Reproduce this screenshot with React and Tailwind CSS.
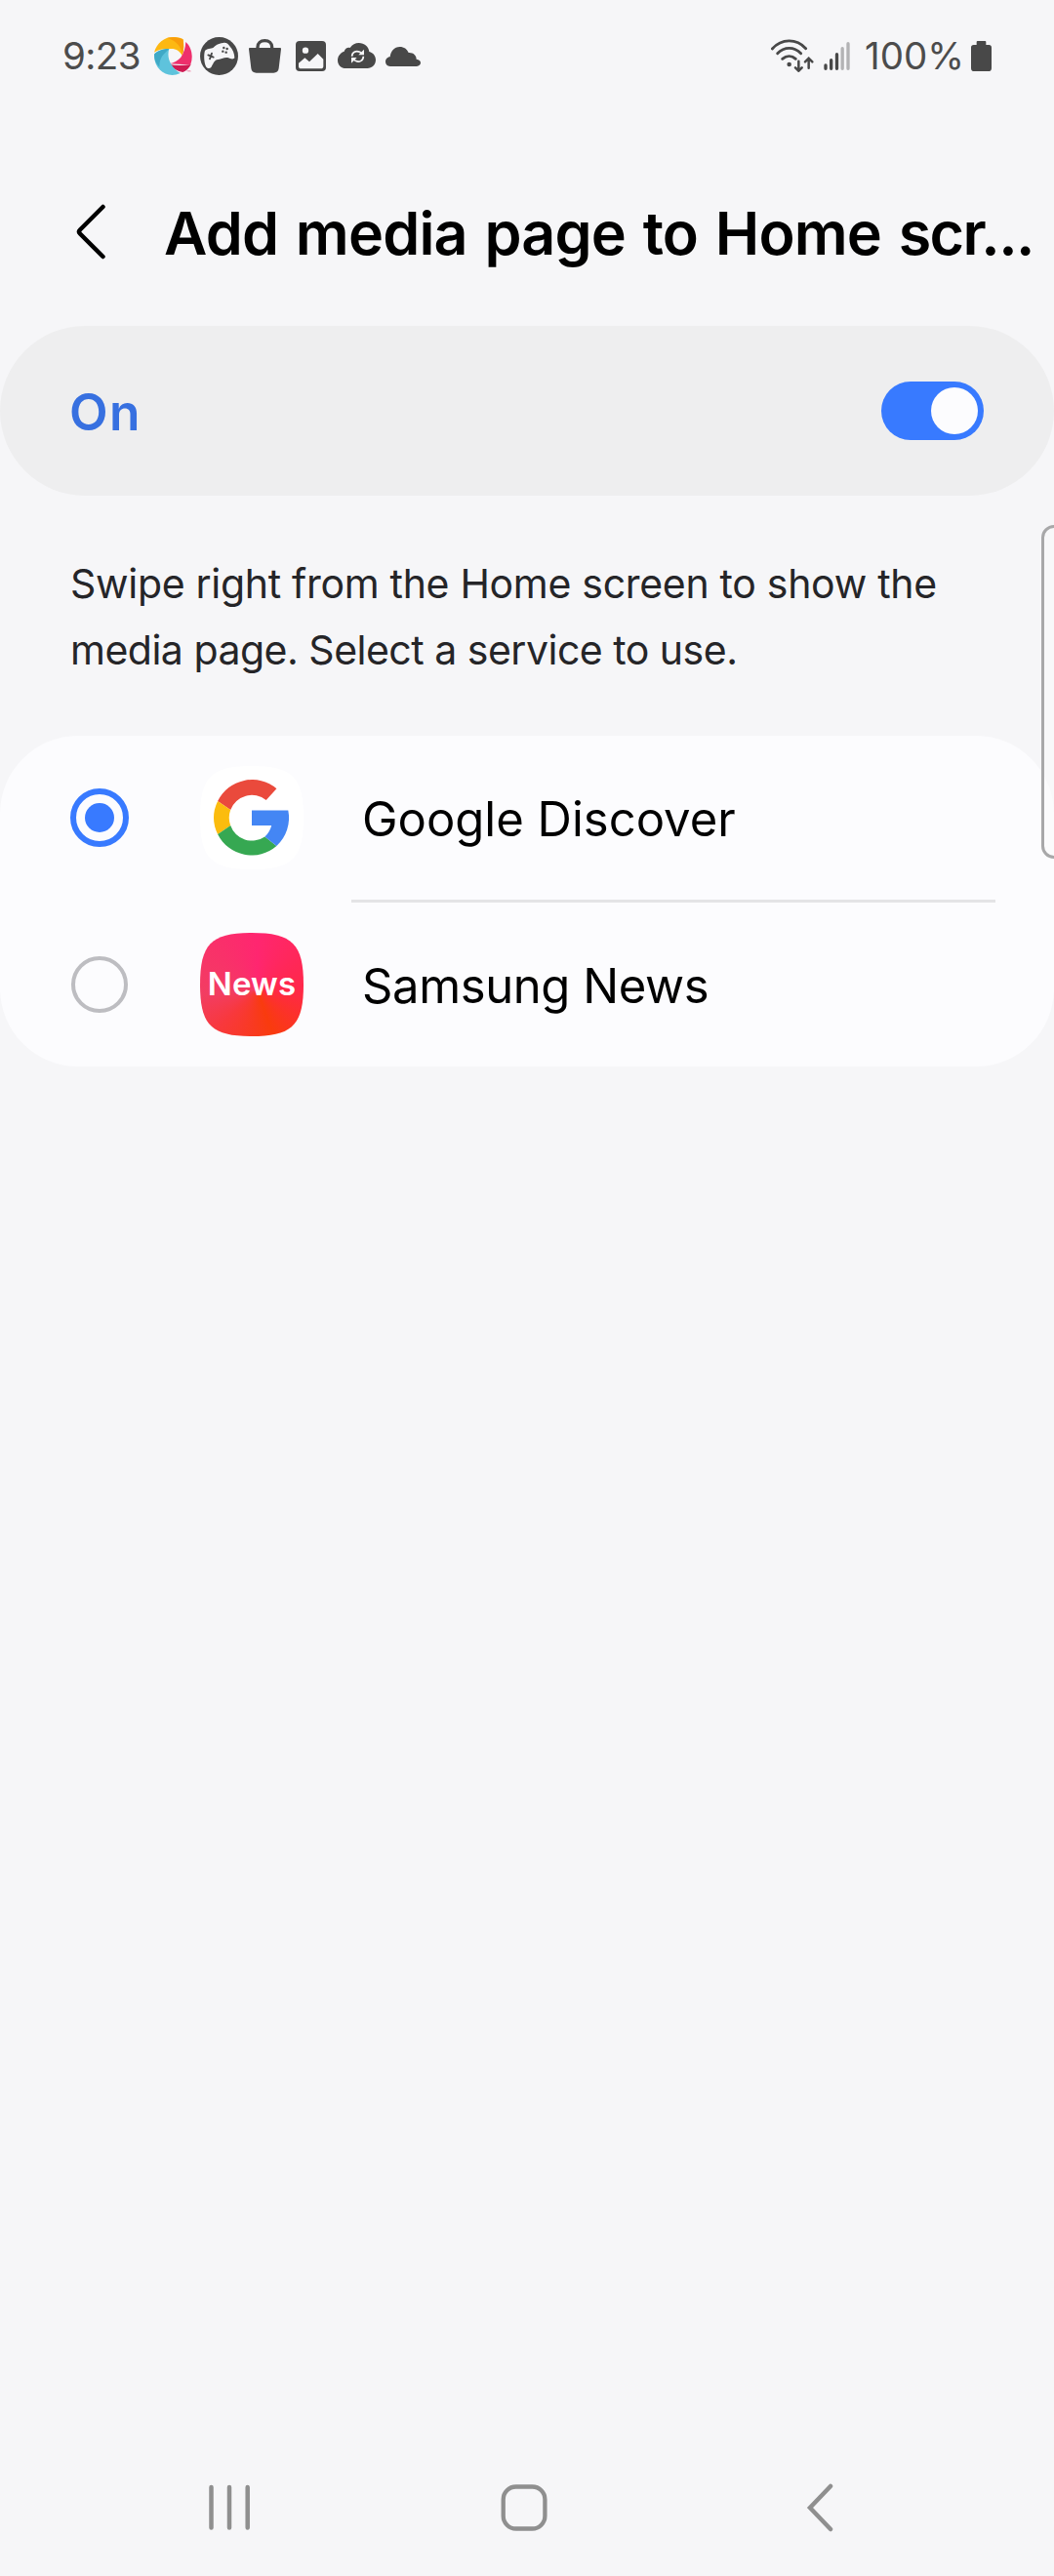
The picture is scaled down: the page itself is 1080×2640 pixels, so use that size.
const INK = "#484848";

function SwirlIcon() {
  return (
    <svg className="ml-[15px]" width="39" height="39" viewBox="324 54 117 117">
      <path d="M324 101C332 72 355 54 382 54c18 0 27 4 31 7 2 16 3 31-3 49-8-12-17-20-34-20-20-1-40 2-52 11z" fill="#fdb813" />
      <path d="M364 56c22-4 42 0 49 6 2 16 3 31-3 48-2-26-16-44-46-54z" fill="#f99d0b" />
      <path d="M421 69c18 16 24 44 15 69-14 2-43-1-66-2 14-3 28-10 36-20 9-14 14-28 15-47z" fill="#ee2f6c" />
      <path d="M437 138c-6 12-14 20-25 24-16-3-31-12-41-24 22 4 45 3 66 0z" fill="#cf1a52" />
      <path d="M324 107c8-9 24-17 46-17-5 16-3 32 6 47 8 13 17 21 28 28-40 19-82-12-80-58z" fill="#5ec3dc" />
      <path d="M324 107c8-9 24-17 46-17-14 16-30 22-30 56-10-10-16-22-16-39z" fill="#3fa9c6" />
      <path d="M424 158h5m1 3v-4l2 2 3-2v4" stroke="#ee7aa0" strokeWidth="2" fill="none" />
    </svg>
  );
}

function GamepadIcon() {
  return (
    <svg className="ml-2" width="39" height="39" viewBox="465 54 117 117">
      <circle cx="523.5" cy="112.500" r="58.500" fill={INK} />
      <path d="M480 96C486 88 498 90 506 86C512 80 520 74 536 72C546 70 552 76 556 82C566 92 571 106 571 118C568 123 560 122 550 117C540 115 530 122 516 124C508 127 505 138 499 147C495 151 488 151 484 146C477 134 476 108 480 96Z" fill="#f6f6f8" />
      <path d="M490 109l16 7m-5-12l-6 17" stroke={INK} strokeWidth="5.500" strokeLinecap="round" />
      <circle cx="538" cy="87" r="3.600" fill={INK} />
      <circle cx="548" cy="90" r="3.600" fill={INK} />
      <circle cx="535" cy="98" r="3.600" fill={INK} />
      <circle cx="545" cy="101" r="3.600" fill={INK} />
    </svg>
  );
}

function BagIcon() {
  return (
    <svg className="ml-[11px]" width="33" height="35" viewBox="615 60 99 105">
      <path d="M642 92v-7c0-12 9-20 22-20s22 8 22 20v7" fill="none" stroke={INK} strokeWidth="10" />
      <path d="M619 87h91c3 0 4 1 4 4l-7 59c-1 9-7 14-16 14h-53c-9 0-15-5-16-14l-7-59c0-3 1-4 4-4z" fill={INK} />
    </svg>
  );
}

function PictureIcon() {
  return (
    <svg className="ml-[15px]" width="31" height="31" viewBox="759 66 93 93">
      <rect x="759" y="66" width="93" height="93" rx="12" fill={INK} />
      <circle cx="789" cy="95" r="9.500" fill="#f6f6f8" />
      <path d="M768 134l19-16 14 12 26-25 17 17v22c0 4-3 7-7 7h-62c-4 0-7-3-7-7z" fill="#f6f6f8" />
    </svg>
  );
}

function CloudSyncIcon() {
  return (
    <svg className="ml-3" width="39" height="26" viewBox="888 72 117 78">
      <path d="M914 150c-16 0-26-11-26-25 0-13 9-23 20-27 3-9 10-13 18-11 7-10 16-15 27-15 17 0 30 11 32 27 12 3 20 13 20 25 0 15-11 26-26 26z" fill={INK} />
      <g fill="none" stroke="#f6f6f8" strokeWidth="5">
        <path d="M932 113c0-12 12-19 24-13l7 5" />
        <path d="M967 113c0 13-12 20-24 14l-8-5" />
      </g>
      <path d="M969 92v17h-17zM930 134v-17h17z" fill="#f6f6f8" />
    </svg>
  );
}

function CloudIcon() {
  return (
    <svg className="ml-[10px] mt-0.5" width="36" height="20" viewBox="1034 78 108 60">
      <path d="M1048 138c-9 0-14-6-14-14 0-8 6-15 14-15 2-18 13-31 30-31 13 0 22 7 27 18 14-1 24 8 24 20 8 1 13 5 13 11s-5 11-12 11z" fill={INK} />
    </svg>
  );
}

function WifiIcon() {
  return (
    <svg width="44" height="34" viewBox="92 58 132 102" fill="none" stroke={INK} strokeLinecap="round">
      <path d="M96 88c29-32 74-32 103-1" strokeWidth="8.500" />
      <path d="M112 102c21-21 51-21 72 0" strokeWidth="8.500" />
      <path d="M127 119c13-11 29-11 41 0" strokeWidth="8.500" />
      <circle cx="148" cy="136" r="6.800" fill={INK} stroke="none" />
      <path d="M177 126v30m-10-10l10 10 10-10M208 147v-30m-11 11l11-11 11 11" strokeWidth="7.500" />
    </svg>
  );
}

function SignalIcon() {
  return (
    <svg className="ml-[10px]" width="27" height="29" viewBox="252 66 81 87" strokeWidth="10" strokeLinecap="round">
      <path d="M258 138v10M275 122v26M292.500 104v44" stroke={INK} />
      <path d="M309.500 86v62M327 71v77" stroke="#b3b3b5" />
    </svg>
  );
}

function BatteryIcon() {
  return (
    <svg className="ml-[7px]" width="21" height="31" viewBox="705 63 63 93">
      <path d="M722 66c0-2 1-3 3-3h23c2 0 3 1 3 3v9h9c5 0 8 3 8 8v63c0 7-3 10-10 10h-43c-7 0-10-3-10-10V83c0-5 3-8 8-8h9z" fill={INK} />
    </svg>
  );
}

function StatusBar() {
  return (
    <div className="flex h-[114px] items-center pl-16 pr-16 text-[38.5px] leading-none tracking-[-0.6px] text-[#4c4c4c]">
      <span className="w-[79px] whitespace-nowrap">9:23</span>
      <SwirlIcon />
      <GamepadIcon />
      <BagIcon />
      <PictureIcon />
      <CloudSyncIcon />
      <CloudIcon />
      <div className="ml-auto flex items-center">
        <WifiIcon />
        <SignalIcon />
        <span className="ml-[15px] w-[102px] whitespace-nowrap tracking-normal">100%</span>
        <BatteryIcon />
      </div>
    </div>
  );
}

function Radio({ checked }) {
  return checked ? (
    <span className="flex size-[60px] items-center justify-center rounded-full border-[6px] border-[#387aff]">
      <span className="size-[30px] rounded-full bg-[#387aff]" />
    </span>
  ) : (
    <span className="m-px size-[58px] rounded-full border-[4.5px] border-[#bdbdc1]" />
  );
}

function GoogleIcon() {
  return (
    <svg width="106" height="106" viewBox="-53 -53 106 106">
      <path d="M0-53C41.500-53 53-41.500 53 0S41.500 53 0 53-53 41.500-53 0-41.500-53 0-53z" fill="#fff" />
      <path d="M25.400-29.700A39 39 0 0 0-34.900-17L-21.800-8A23.300 23.300 0 0 1 14.700-18z" fill="#ea4a3c" />
      <path d="M-34.900-17A39 39 0 0 0-34.900 17L-21.800 8A23.300 23.300 0 0 1-21.800-8z" fill="#fbbc0e" />
      <path d="M-34.900 17A39 39 0 0 0 25.400 29L13.400 19.500A23.300 23.300 0 0 1-21.800 8z" fill="#36a852" />
      <path d="M0-7.500H37.300A39 39 0 0 1 25.400 29L13.400 19.500A23.300 23.300 0 0 0 20.200 8H0z" fill="#4486f4" />
    </svg>
  );
}

function NewsIcon() {
  return (
    <span className="flex size-[106px] items-center justify-center bg-[conic-gradient(from_0deg_at_55%_55%,#ff2670,#ff2848_90deg,#f93b0e_160deg,#f8383c_225deg,#f23d62_265deg,#ff2670)] [clip-path:path('M53_0C94.5_0_106_11.500_106_53S94.500_106_53_106_0_94.500_0_53_11.500_0_53_0z')]">
      <span className="text-[33px] font-semibold tracking-[0.2px] text-white">News</span>
    </span>
  );
}

function Option({ checked, icon, children }) {
  return (
    <div className="flex h-[168px] items-center pl-[72px]">
      <Radio checked={checked} />
      <span className="ml-[73px]">{icon}</span>
      <span className="ml-[60px] mt-[3px] whitespace-nowrap text-[49px] leading-none text-black">{children}</span>
    </div>
  );
}

export default function App() {
  return (
    <div className="relative flex h-[2640px] w-[1080px] flex-col overflow-hidden bg-[#f6f6f8] font-['Inter',sans-serif]">
      <StatusBar />

      <header className="flex h-[220px] items-center pl-[78px]">
        <svg className="mt-[27px]" width="31" height="57" viewBox="0 0 31 57" fill="none" stroke="#000" strokeWidth="4.5" strokeLinecap="round" strokeLinejoin="round">
          <path d="M27.500 3L4 26.500Q2 28.500 4 30.500L27.500 54" />
        </svg>
        <h1 className="ml-[59px] mt-[30px] whitespace-nowrap text-[61px] font-semibold leading-none tracking-[-0.8px] text-black [word-spacing:3px]">
          Add media page to Home <span className="tracking-[-1.6px]">scr...</span>
        </h1>
      </header>

      <section className="flex h-[174px] items-center justify-between rounded-full bg-[#eeeeef] pl-[71px] pr-[72px]">
        <span className="mt-1 text-[51.5px] font-semibold leading-none tracking-[1.5px] text-[#3770e0]">On</span>
        <span className="flex h-[60px] w-[105px] items-center justify-end rounded-full bg-[#387aff] pr-1.5">
          <span className="size-12 rounded-full bg-[#fcfcfe]" />
        </span>
      </section>

      <p className="mt-[56px] flex flex-col pl-[72px] text-[41px] leading-[68px] text-[#252528]">
        <span className="whitespace-nowrap tracking-[-0.3px]">Swipe right from the Home screen to show the</span>
        <span className="whitespace-nowrap tracking-[-0.5px]">media page. Select a service to use.</span>
      </p>

      <section className="mt-[54px] rounded-[80px] bg-[#fcfcfe]">
        <Option checked icon={<GoogleIcon />}>
          Google Discover
        </Option>
        <div className="ml-[360px] mr-[60px] h-[3px] bg-[#e4e4e6]" />
        <Option icon={<NewsIcon />}>
          <span className="tracking-[-0.4px]">Samsung News</span>
        </Option>
      </section>

      <nav className="mt-auto flex h-[140px] items-center px-[214px] text-[#8f8f8f]">
        <svg width="42" height="48" viewBox="0 0 42 48" stroke="currentColor" strokeWidth="4.500" strokeLinecap="round">
          <path d="M2.500 3v41.500M21 3v41.500M39.700 3v41.500" />
        </svg>
        <svg className="ml-[257px]" width="48" height="48" viewBox="0 0 48 48" fill="none" stroke="currentColor" strokeWidth="4.300">
          <rect x="2.700" y="2.500" width="42.700" height="43" rx="13" />
        </svg>
        <svg className="ml-[265px]" width="28" height="50" viewBox="0 0 28 50" fill="none" stroke="currentColor" strokeWidth="4.500" strokeLinecap="round" strokeLinejoin="miter">
          <path d="M25 3L4 25l21 22" />
        </svg>
      </nav>

      <div className="absolute left-[1067px] top-[538px] h-[342px] w-[26px] rounded-[13px] border-[3px] border-[#a8a8a9] bg-[#fafafa]/50" />
    </div>
  );
}
